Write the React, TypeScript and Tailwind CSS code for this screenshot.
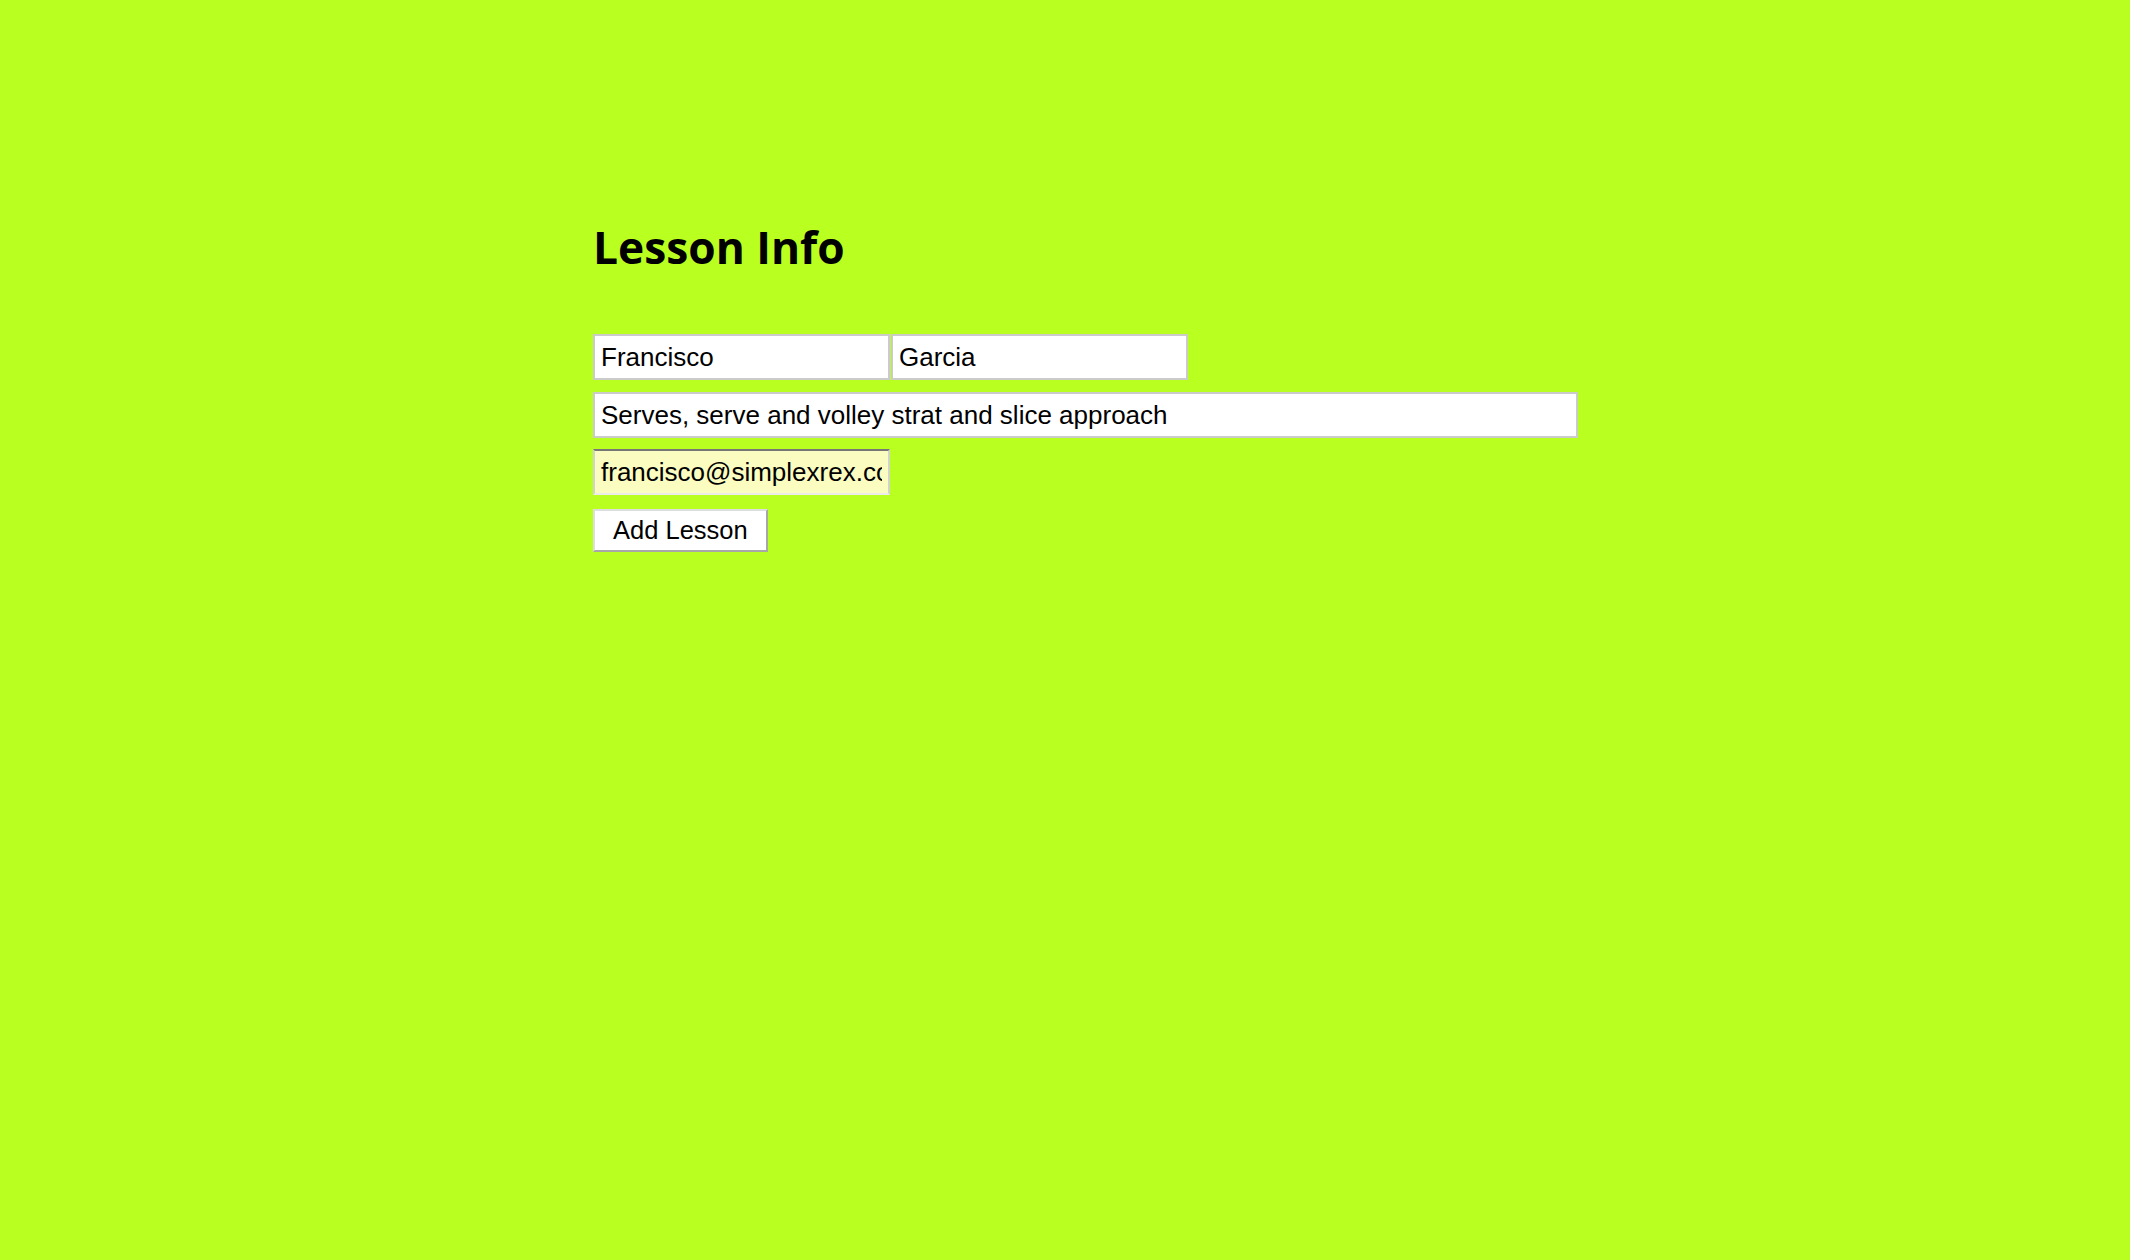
import React, { useState } from "react";

const fieldClass =
  "h-[46px] border-2 px-[6px] text-[26px] text-black outline-none font-['Liberation_Sans',Arial,sans-serif]";

const plainField = `${fieldClass} border-[#cbcbcb] bg-white`;

const App: React.FC = () => {
  const [first, setFirst] = useState("Francisco");
  const [last, setLast] = useState("Garcia");
  const [topic, setTopic] = useState(
    "Serves, serve and volley strat and slice approach"
  );
  const [email, setEmail] = useState("francisco@simplexrex.com");

  return (
    <div className="min-h-[1260px] w-full bg-[#b9ff20]">
      <div className="pl-[593px] pt-[213px]">
        <h1 className="mb-[53px] text-[44.3px] font-bold leading-[68px] text-black font-['Open_Sans',sans-serif]">
          Lesson Info
        </h1>

        <form
          className="flex flex-col items-start"
          onSubmit={(e) => e.preventDefault()}
        >
          {/* Name row */}
          <div className="flex gap-px">
            <input
              className={`${plainField} w-[297px]`}
              value={first}
              onChange={(e) => setFirst(e.target.value)}
            />
            <input
              className={`${plainField} w-[297px]`}
              value={last}
              onChange={(e) => setLast(e.target.value)}
            />
          </div>

          <input
            className={`${plainField} mt-[12px] w-[985px]`}
            value={topic}
            onChange={(e) => setTopic(e.target.value)}
          />

          <input
            className={`${fieldClass} mt-[11px] w-[297px] border-[#d2d2d2] border-t-[#777777] border-b-[#ececec] bg-[#fafcc0]`}
            value={email}
            onChange={(e) => setEmail(e.target.value)}
          />

          <button
            type="submit"
            className="mt-[14px] h-[43px] border-2 border-[#dedede] border-r-[#a8a8a8] border-b-[#a8a8a8] bg-white px-[18px] text-[25.5px] text-black font-['Liberation_Sans',Arial,sans-serif]"
          >
            Add Lesson
          </button>
        </form>
      </div>
    </div>
  );
};

export default App;
